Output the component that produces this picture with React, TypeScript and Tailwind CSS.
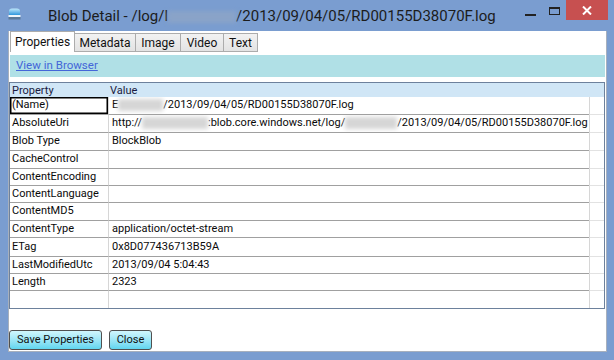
import React from "react";

const font = { fontFamily: 'Roboto, "Noto Sans", sans-serif' };

function Smudge({ w, tone = "row" }: { w: number; tone?: "row" | "title" }) {
  return (
    <span
      className={
        "inline-block h-[12px] align-middle blur-[2px] " +
        (tone === "title" ? "bg-[#8aa3c8]" : "bg-[#d6d6d6]")
      }
      style={{ width: w }}
    />
  );
}

type Row = { name: string; value: React.ReactNode; h: number; selected?: boolean };

const rows: Row[] = [
  {
    name: "(Name)",
    h: 18,
    selected: true,
    value: (
      <>
        E<Smudge w={45} />
        /2013/09/04/05/RD00155D38070F.log
      </>
    ),
  },
  {
    name: "AbsoluteUri",
    h: 18,
    value: (
      <>
        http://<Smudge w={66} />
        :blob.core.windows.net/log/<Smudge w={52} />
        /2013/09/04/05/RD00155D38070F.log
      </>
    ),
  },
  { name: "Blob Type", h: 18, value: "BlockBlob" },
  { name: "CacheControl", h: 18, value: "" },
  { name: "ContentEncoding", h: 17, value: "" },
  { name: "ContentLanguage", h: 17, value: "" },
  { name: "ContentMD5", h: 18, value: "" },
  { name: "ContentType", h: 17, value: "application/octet-stream" },
  { name: "ETag", h: 19, value: "0x8D077436713B59A" },
  { name: "LastModifiedUtc", h: 17, value: "2013/09/04 5:04:43" },
  { name: "Length", h: 17, value: "2323" },
];

function Tab({ label, w, active }: { label: string; w: number; active?: boolean }) {
  return (
    <div
      className={
        "-ml-px first:ml-0 flex items-center justify-center border border-[#acacac] text-[12px] text-[#111] " +
        (active
          ? "relative z-10 h-[21px] border-b-0 bg-white"
          : "h-[19px] bg-gradient-to-b from-[#f2f2f2] to-[#e3e3e3]")
      }
      style={{ width: w }}
    >
      {label}
    </div>
  );
}

function CyanButton({ label, w }: { label: string; w: number }) {
  return (
    <button
      className="flex h-[20px] items-center justify-center rounded-[3px] border border-[#505050] bg-gradient-to-b from-[#d0f6fd] to-[#5fd6ef] text-[11px] text-[#111]"
      style={{ width: w }}
    >
      {label}
    </button>
  );
}

export default function App() {
  return (
    <div className="flex h-[360px] w-[614px] flex-col bg-[#7a9dd0]" style={font}>
      {/* title bar */}
      <div className="flex h-[31px] shrink-0">
        <div className="ml-[8px] mt-[8px]">
          <svg width="13" height="12" viewBox="0 0 13 12">
            <defs>
              <linearGradient id="dome" x1="0" y1="0" x2="0" y2="1">
                <stop offset="0" stopColor="#bfe8fb" />
                <stop offset="1" stopColor="#2f97dc" />
              </linearGradient>
            </defs>
            <path d="M1 7 V3 Q1 0.5 4 0.5 H9 Q12 0.5 12 3 V7 Z" fill="url(#dome)" />
            <rect x="0.5" y="7" width="12" height="2" fill="#eef6fb" />
            <rect x="0.5" y="9" width="12" height="2.5" fill="#5b7a99" />
          </svg>
        </div>
        <div className="ml-[27px] mt-[6px] whitespace-nowrap text-[15px] leading-[20px] text-[#1c1c1c]">
          Blob Detail - /log/l<Smudge w={68} tone="title" />/2013/09/04/05/RD00155D38070F.log
        </div>
        <div className="ml-auto mr-[6px] flex h-[20px]">
          <div className="flex w-[24px] items-center justify-center">
            <div className="mt-[10px] h-[2px] w-[11px] bg-[#222]" />
          </div>
          <div className="flex w-[24px] items-center justify-center">
            <div className="mt-[2px] h-[8px] w-[11px] border border-t-2 border-[#222]" />
          </div>
          <div className="flex w-[42px] items-center justify-center bg-[#c75050]">
            <svg width="10" height="9" viewBox="0 0 10 9">
              <path d="M1 0.5 L9 8.5 M9 0.5 L1 8.5" stroke="#fff" strokeWidth="2" />
            </svg>
          </div>
        </div>
      </div>

      {/* client area */}
      <div className="ml-[8px] mr-[7px] flex h-[321px] flex-col border-x border-b border-[#a7b0bd] bg-white">
        {/* tabs */}
        <div className="ml-[1px] flex h-[21px] items-end">
          <Tab label="Properties" w={65} active />
          <Tab label="Metadata" w={62} />
          <Tab label="Image" w={46} />
          <Tab label="Video" w={44} />
          <Tab label="Text" w={35} />
        </div>

        {/* link bar */}
        <div className="ml-[1px] mr-[1px] mt-[3px] flex h-[22px] items-center bg-[#b0e0e6] pl-[6px]">
          <span className="text-[11.5px] text-[#4466d8] underline">View in Browser</span>
        </div>

        {/* property grid */}
        <div className="mr-[1px] mt-[5px] flex flex-col border border-[#6d819c] text-[11px] text-[#0a0a0a]">
          <div className="flex h-[14px] items-center bg-[#d0e6f6] leading-none text-[#1a1a40]">
            <div className="w-[99px] pl-[2px]">Property</div>
            <div className="pl-[1px]">Value</div>
          </div>
          {rows.map((r) => (
            <div key={r.name} className="flex" style={{ height: r.h }}>
              <div
                className={
                  "flex w-[99px] shrink-0 items-center whitespace-nowrap border-b border-r border-b-[#a0a0a0] border-r-[#d6d6d6] pl-[2px] " +
                  (r.selected ? "ring-[1.5px] ring-inset ring-black" : "")
                }
              >
                {r.name}
              </div>
              <div className="flex min-w-0 flex-1 items-center overflow-hidden whitespace-nowrap border-b border-[#a0a0a0] pl-[3px]">
                <span>{r.value}</span>
              </div>
              <div className="w-[15px] shrink-0 border-b border-l border-b-[#e2e2e2] border-l-[#d6d6d6]" />
            </div>
          ))}
          <div className="flex h-[17px]">
            <div className="w-[99px] shrink-0 border-r border-[#d6d6d6]" />
            <div className="flex-1" />
            <div className="w-[15px] shrink-0 border-l border-[#d6d6d6]" />
          </div>
        </div>

        {/* buttons */}
        <div className="mt-[21px] flex gap-[7px]">
          <CyanButton label="Save Properties" w={93} />
          <CyanButton label="Close" w={43} />
        </div>
      </div>
    </div>
  );
}
